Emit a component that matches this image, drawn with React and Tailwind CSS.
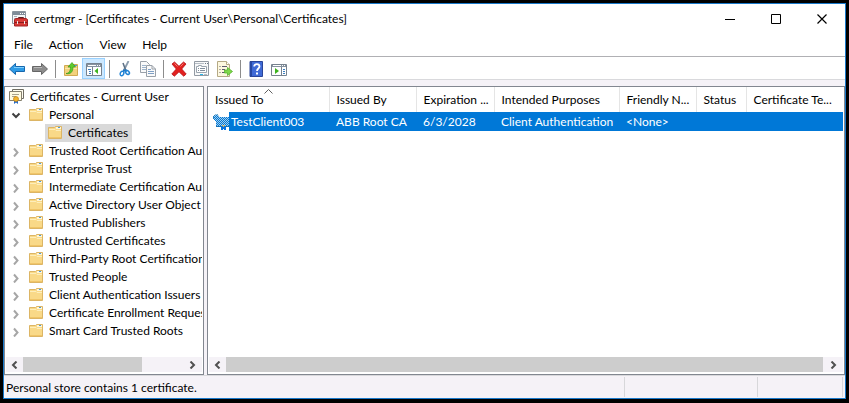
import { useState } from "react";
import clsx from "clsx";

const menus = ["File", "Action", "View", "Help"];

const stores = [
  "Trusted Root Certification Authorities",
  "Enterprise Trust",
  "Intermediate Certification Authorities",
  "Active Directory User Object",
  "Trusted Publishers",
  "Untrusted Certificates",
  "Third-Party Root Certification Authorities",
  "Trusted People",
  "Client Authentication Issuers",
  "Certificate Enrollment Requests",
  "Smart Card Trusted Roots",
];

const columns = [
  { label: "Issued To", width: "w-[121px]" },
  { label: "Issued By", width: "w-[87px]" },
  { label: "Expiration ...", width: "w-[78px]" },
  { label: "Intended Purposes", width: "w-[125px]" },
  { label: "Friendly N...", width: "w-[77px]" },
  { label: "Status", width: "w-[50px]" },
  { label: "Certificate Te...", width: "" },
];

const certificate = ["ABB Root CA", "6/3/2028", "Client Authentication", "<None>", "", ""];

function Icon({ children }) {
  return (
    <svg width="16" height="16" viewBox="0 0 16 16" className="shrink-0" aria-hidden="true">
      {children}
    </svg>
  );
}

function AppIcon() {
  return (
    <Icon>
      <path d="M.5.5h13v12H.5z" fill="#f4f6f8" stroke="#8a949e" />
      <path d="M1 1h12v3H1z" fill="#7f8c99" />
      <path d="M8 2h1v1H8zM10 2h1v1h-1zM12 2h1v1h-1z" fill="#fff" />
      <path d="M2 5.500h3M2 7.500h2" stroke="#a5afb9" />
      <path d="M6.500 8V6.500h5V8" fill="none" stroke="#5c2222" />
      <path d="M2.500 8.500 4 7.500h10l1.500 1v6.500h-13z" fill="#d83a36" stroke="#a32224" />
      <path d="M3 11.500h12" stroke="#8c1a1d" />
      <path d="M5 10h1v3H5zM12 10h1v3h-1z" fill="#e8e8e8" />
    </Icon>
  );
}

function ArrowIcon({ forward }) {
  return (
    <Icon>
      <path
        d={forward ? "M15.500 8 9.500 2.500v3h-9v5h9v3z" : "M.5 8l6-5.500v3h9v5h-9v3z"}
        fill={forward ? "#8d8d8d" : "#2e9be6"}
        stroke={forward ? "#666" : "#1767ad"}
      />
      <path
        d={forward ? "M2 6.500h8" : "M5 6.500h10"}
        stroke={forward ? "#b9b9b9" : "#7fd0ff"}
      />
    </Icon>
  );
}

function UpIcon() {
  return (
    <Icon>
      <path d="M1.500 4.500h7l1-1h5v11h-13z" fill="#f3d17c" stroke="#d1aa52" />
      <path d="M2 7h12v1H2z" fill="#fbe7a7" />
      <path d="M11 4h3v1h-3z" fill="#4d9ad6" />
      <path d="M3 12.500c3 0 4.500-2.500 4.500-6.500H5L9 1.500l3.500 4.500H10c0 5-2.500 7.500-7 6.500z" fill="#5fcb2c" stroke="#3a9a1c" strokeWidth=".7" />
    </Icon>
  );
}

function TreePaneIcon() {
  return (
    <Icon>
      <path d="M.5 2.500h15v12H.5z" fill="#fff" stroke="#77828e" />
      <path d="M1 3h14v3H1z" fill="#8793a0" />
      <path d="M2 4h8v1H2zM11 4h1v1h-1zM13 4h1v1h-1z" fill="#fff" />
      <path d="M6.500 6v8" stroke="#77828e" />
      <path d="M2 8.500h3M3 10.500h2M3 12.500h2" stroke="#3b7fc0" />
      <path d="M12 7v6L8.500 10z" fill="#3db31d" />
    </Icon>
  );
}

function CutIcon() {
  return (
    <Icon>
      <path d="M11.500 0 6.500 10" stroke="#8b9cad" strokeWidth="1.800" />
      <path d="M6 2 9 10" stroke="#5d7186" strokeWidth="1.600" />
      <path d="M6 9.500h4" stroke="#1d76c4" strokeWidth="2" />
      <ellipse cx="5" cy="12.500" rx="1.700" ry="2.300" fill="none" stroke="#2083d5" strokeWidth="1.500" transform="rotate(25 5 12.500)" />
      <ellipse cx="10.500" cy="11.500" rx="1.600" ry="2.200" fill="none" stroke="#2083d5" strokeWidth="1.500" transform="rotate(-40 10.500 11.500)" />
    </Icon>
  );
}

function CopyIcon() {
  return (
    <Icon>
      <path d="M.5.5h6l3 3v8h-9z" fill="#fafafa" stroke="#9aa1a9" />
      <path d="M2 4.500h4M2 6.500h4M2 8.500h4" stroke="#9db4cc" />
      <path d="M6.500 4.500h5.500l3.500 3.500v7.500h-9z" fill="#fafafa" stroke="#9aa1a9" />
      <path d="M12 4.500V8h3.500" fill="none" stroke="#9aa1a9" />
      <path d="M8 8.500h3M8 10.500h6M8 12.500h6" stroke="#7f9fc4" />
    </Icon>
  );
}

function DeleteIcon() {
  return (
    <Icon>
      <path d="M3.500 1 8 5.300 12.500 1 15 3 10.700 8 15.200 13 12.700 15.200 8 10.800 3.400 15.200.8 13 5.300 8 1 3z" fill="#e3211f" stroke="#b51216" strokeWidth=".8" />
      <path d="M3.500 2.500 6.500 5.500M12.500 2.500l-3 3" stroke="#f57a72" />
    </Icon>
  );
}

function PropertiesIcon() {
  return (
    <Icon>
      <path d="M.5.5h14v14H.5z" fill="#f7f8f9" stroke="#929aa3" />
      <path d="M1 2.500h9" stroke="#b7bec6" />
      <path d="M11 2h1v1h-1zM13 2h1v1h-1z" fill="#6f7a86" />
      <path d="M2.500 5.500h2v-1h3v1h5v6h-10z" fill="#fff" stroke="#9aa4ae" />
      <path d="M4 7.500h1M6 7.500h5M4 9.500h1M6 9.500h5" stroke="#7e8d9c" />
      <path d="M6 13h3v1H6z" fill="#27b6e8" />
      <path d="M10 13h3v1h-3z" fill="#b4bcc4" />
    </Icon>
  );
}

function ExportIcon() {
  return (
    <Icon>
      <path d="M.5.500h9l3 3v12H.5z" fill="#fdf8df" stroke="#b5a985" />
      <path d="M9.500.5v3h3" fill="#fff" stroke="#b5a985" />
      <path d="M2.500 5.500h1M5 5.500h5M2.500 8.500h1M5 8.500h3M2.500 11.500h1M5 11.500h3" stroke="#5d5a6c" />
      <path d="M7.500 9h3V6.500l5 4-5 4V12h-3z" fill="#7fd84a" stroke="#55b32f" strokeWidth=".8" />
    </Icon>
  );
}

function HelpIcon() {
  return (
    <Icon>
      <path d="M2 .5h12.500v15H2z" fill="#3f6ad6" stroke="#2a4599" />
      <path d="M2 1h2v14H2z" fill="#2747a2" />
      <path d="M6.200 5.500c0-3.300 5.300-3 5.300 0 0 2-2.500 2-2.500 4.500" fill="none" stroke="#fff" strokeWidth="1.800" />
      <path d="M8 11.500h2v2H8z" fill="#fff" />
    </Icon>
  );
}

function ActionPaneIcon() {
  return (
    <Icon>
      <path d="M.5 3.500h15v11H.5z" fill="#fff" stroke="#77828e" />
      <path d="M1 4h14v2H1z" fill="#8793a0" />
      <path d="M2 4h8v1H2zM11 4h1v1h-1zM13 4h1v1h-1z" fill="#fff" />
      <path d="M10.500 6v8" stroke="#77828e" />
      <path d="M4 7v6l4-3z" fill="#3db31d" />
      <path d="M12 8.500h2M12 10.500h2M12 12.500h2" stroke="#3b7fc0" />
    </Icon>
  );
}

function FolderIcon() {
  return (
    <Icon>
      <path d="M1.500 2.500h6l1-1h6v12h-13z" fill="#f9d988" stroke="#dcb565" />
      <path d="M9 2h5v2H9z" fill="#fff6da" />
      <path d="M11 2h2v1h-2z" fill="#4a9bd4" />
      <path d="M2 4.500h6l1 1h5" fill="none" stroke="#fdeebb" />
      <path d="M2 12h12v1H2z" fill="#f0c568" />
    </Icon>
  );
}

function RootIcon() {
  return (
    <Icon>
      <path d="M3.500.5h11v9h-11z" fill="#fffdf0" stroke="#6e6b62" />
      <path d="M.5 2.500h12v9H.5z" fill="#fffbe2" stroke="#85806f" />
      <path d="M3 5.500h7M3 7.500h4" stroke="#a9a28a" />
      <path d="M5 10v5l2-1.500L9 15v-5z" fill="#2369c7" />
      <circle cx="7" cy="10" r="2.500" fill="#f5b52c" stroke="#bd7f13" strokeWidth=".7" />
    </Icon>
  );
}

function CertificateIcon() {
  return (
    <Icon>
      <defs>
        <pattern id="dither" width="2" height="2" patternUnits="userSpaceOnUse">
          <path d="M0 0h2v2H0z" fill="#a5cdea" />
          <path d="M0 0h1v1H0zM1 1h1v1H1z" fill="#0078d7" />
        </pattern>
      </defs>
      <path d="M1 1h4l1 2h10v10H3V7L0 5V2z" fill="url(#dither)" shapeRendering="crispEdges" />
      <path d="M.5 4.500v-2l2-2h2l1.500 2" fill="none" stroke="#2a7fb5" strokeDasharray="2 1" />
      <path d="M3 12.500h13" stroke="#2a6c99" strokeDasharray="1 1" />
      <path d="M8 12h5v4h-2v-1h-1v1H8z" fill="#0873df" />
      <path d="M9 11h1v1H9zM11 11h1v1h-1zM10 12h1v1h-1z" fill="#e7ad32" />
    </Icon>
  );
}

const tools = [
  { label: "Back", icon: <ArrowIcon /> },
  { label: "Forward", icon: <ArrowIcon forward /> },
  null,
  { label: "Up one level", icon: <UpIcon /> },
  { label: "Show console tree", icon: <TreePaneIcon />, active: true },
  null,
  { label: "Cut", icon: <CutIcon /> },
  { label: "Copy", icon: <CopyIcon /> },
  null,
  { label: "Delete", icon: <DeleteIcon /> },
  { label: "Properties", icon: <PropertiesIcon /> },
  { label: "Export list", icon: <ExportIcon /> },
  null,
  { label: "Help", icon: <HelpIcon /> },
  { label: "Show action pane", icon: <ActionPaneIcon /> },
];

function Toolbar() {
  return (
    <div className="flex h-[23px] shrink-0 items-end border-b border-[#d9d9dc] bg-white pl-px">
      {tools.map((tool, i) =>
        tool ? (
          <button
            key={tool.label}
            aria-label={tool.label}
            className={clsx(
              "flex h-[21px] w-[23px] items-end justify-center border pb-px",
              tool.active ? "border-[#99d1ff] bg-[#cce8ff]" : "border-transparent"
            )}
          >
            {tool.icon}
          </button>
        ) : (
          <span key={i} className="flex w-2 justify-center pb-px">
            <span className="h-[18px] w-px bg-[#8c8c8c]" />
          </span>
        )
      )}
    </div>
  );
}

function Chevron({ open }) {
  return (
    <svg width="10" height="12" viewBox="0 0 10 12" className="shrink-0" aria-hidden="true">
      <path
        d={open ? "M1.500 4.500 5 8 8.500 4.500" : "M3 3.500 6.500 7.500 3 11.500"}
        fill="none"
        stroke={open ? "#404040" : "#a6a6a6"}
        strokeWidth="2"
      />
    </svg>
  );
}

function ScrollBar({ thumb }) {
  return (
    <div className="mx-px mb-0.5 flex h-[15px] shrink-0 bg-[#f5f2f7]">
      <button aria-label="Scroll left" className="flex w-[17px] items-center justify-center">
        <svg width="7" height="8" viewBox="0 0 7 8" aria-hidden="true">
          <path d="M5.500.5 2 4l3.500 3.500" fill="none" stroke="#505050" strokeWidth="2" />
        </svg>
      </button>
      <div className="flex-1">
        <div className={clsx("h-full bg-[#cdcdcd]", thumb)} />
      </div>
      <button aria-label="Scroll right" className="flex w-5 items-center justify-center">
        <svg width="7" height="8" viewBox="0 0 7 8" aria-hidden="true">
          <path d="M1.500.5 5 4 1.500 7.500" fill="none" stroke="#505050" strokeWidth="2" />
        </svg>
      </button>
    </div>
  );
}

function StoreTree({ open, onToggle }) {
  return (
    <nav className="flex w-[200px] shrink-0 flex-col border border-[#828790] bg-white">
      <ul className="min-h-0 flex-1 overflow-hidden pt-px pr-px whitespace-nowrap">
        <li className="flex h-[18px] items-center gap-[5px] overflow-hidden pl-1">
          <RootIcon />
          <span>Certificates - Current User</span>
        </li>
        <li>
          <button onClick={onToggle} className="flex h-[18px] items-center pl-[6px]">
            <Chevron open={open} />
            <span className="flex items-center gap-[5px] pl-[7px]">
              <FolderIcon />
              Personal
            </span>
          </button>
          {open && (
            <button className="ml-10 flex h-[18px] items-center gap-[5px] bg-[#d9d9d9] pr-1 pl-0.5">
              <FolderIcon />
              Certificates
            </button>
          )}
        </li>
        {stores.map((name) => (
          <li key={name} className="overflow-hidden">
            <button className="flex h-[18px] items-center pl-[6px]">
              <Chevron />
              <span className="flex items-center gap-[5px] pl-[7px]">
                <FolderIcon />
                {name}
              </span>
            </button>
          </li>
        ))}
      </ul>
      <ScrollBar thumb="w-3/4" />
    </nav>
  );
}

function CertificateList() {
  return (
    <main className="flex min-w-0 flex-1 flex-col border border-[#828790] bg-white">
      <div className="min-h-0 flex-1 overflow-hidden pr-px">
        <table className="w-full table-fixed border-collapse text-left whitespace-nowrap">
          <thead>
            <tr className="h-[25px]">
              {columns.map((col, i) => (
                <th
                  key={col.label}
                  className={clsx(
                    "relative p-0 pl-[7px] font-normal",
                    col.width,
                    i < columns.length - 1 && "border-r border-[#e5e5e5]"
                  )}
                >
                  {col.label}
                  {i === 0 && (
                    <svg width="9" height="5" viewBox="0 0 9 5" className="absolute top-0.5 left-1/2 -ml-1" aria-hidden="true">
                      <path d="M.5 4.500l4-4 4 4" fill="none" stroke="#606060" />
                    </svg>
                  )}
                </th>
              ))}
            </tr>
          </thead>
          <tbody>
            <tr className="h-[19px] text-white">
              <td className="p-0 pl-[5px]">
                <div className="flex h-[19px] items-center">
                  <CertificateIcon />
                  <span className="flex h-full flex-1 items-center bg-[#0078d7] pl-0.5">TestClient003</span>
                </div>
              </td>
              {certificate.map((value, i) => (
                <td key={i} className="bg-[#0078d7] p-0 pl-[7px]">
                  {value}
                </td>
              ))}
            </tr>
          </tbody>
        </table>
      </div>
      <ScrollBar thumb="w-full" />
    </main>
  );
}

export default function App() {
  const [open, setOpen] = useState(true);

  return (
    <div className="h-screen bg-black p-[3px] pb-1 font-['Lato','Open_Sans',sans-serif] text-[12px] leading-4 text-black">
      <div className="flex h-full flex-col border border-[#1979ca] bg-white">
        <header className="flex h-[30px] shrink-0 items-center">
          <div className="flex flex-1 items-center gap-[6px] pl-2">
            <AppIcon />
            <h1>certmgr - [Certificates - Current User\Personal\Certificates]</h1>
          </div>
          <button aria-label="Minimize" className="flex h-full w-[46px] items-center justify-center">
            <svg width="11" height="11" viewBox="0 0 11 11" aria-hidden="true">
              <path d="M0 5.500h10" stroke="#000" />
            </svg>
          </button>
          <button aria-label="Maximize" className="flex h-full w-[46px] items-center justify-center">
            <svg width="11" height="11" viewBox="0 0 11 11" aria-hidden="true">
              <path d="M.5.5h9v9h-9z" fill="none" stroke="#000" />
            </svg>
          </button>
          <button aria-label="Close" className="flex h-full w-[46px] items-center justify-center">
            <svg width="11" height="11" viewBox="0 0 11 11" aria-hidden="true">
              <path d="M.5.5l9 9M9.500.5l-9 9" stroke="#000" strokeWidth="1.200" />
            </svg>
          </button>
        </header>

        <nav className="flex h-[23px] shrink-0 items-center border-b border-[#b0b0b4] pl-0.5">
          {menus.map((item) => (
            <button key={item} className="px-2">
              {item}
            </button>
          ))}
        </nav>

        <Toolbar />

        <div className="flex min-h-0 flex-1 gap-[3px] bg-[#f5f2f7] pt-[6px]">
          <StoreTree open={open} onToggle={() => setOpen(!open)} />
          <CertificateList />
        </div>

        <footer className="flex h-[23px] shrink-0 items-stretch border-t border-[#d9d9dc] bg-[#f5f2f7] pt-px pr-0.5 pb-px">
          <p className="flex flex-1 items-center border-r border-[#d7d7da] pt-0.5 pl-0.5">
            Personal store contains 1 certificate.
          </p>
          <div className="w-[133px] border-r border-[#d7d7da]" />
          <div className="w-[85px] border-r border-[#d7d7da]" />
        </footer>
      </div>
    </div>
  );
}
